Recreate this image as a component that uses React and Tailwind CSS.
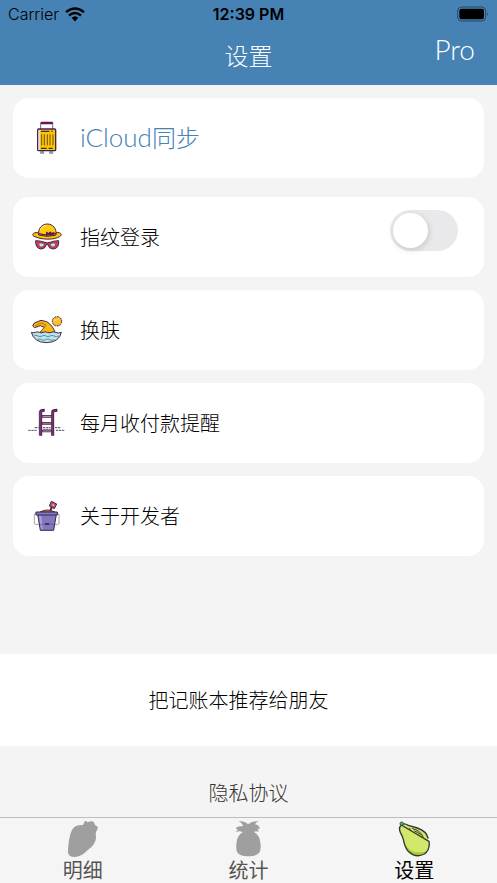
import { useState } from 'react'
import clsx from 'clsx'

const INK = '#45234f'

function WifiIcon() {
  return (
    <svg viewBox="0 0 60 44" className="h-[15px] w-[20px]" fill="none" stroke="#000" strokeWidth="7" aria-hidden="true">
      <path d="M3 15Q30 -7 57 15" />
      <path d="M12 25Q30 10 48 25" />
      <path d="M20 32Q30 23 40 32L30 43Z" fill="#000" stroke="none" />
    </svg>
  )
}

function BatteryIcon() {
  return (
    <svg viewBox="0 0 96 48" className="h-4 w-8" aria-hidden="true">
      <rect x="2" y="3" width="84" height="42" rx="12" fill="none" stroke="#000" strokeOpacity=".45" strokeWidth="3" />
      <rect x="7" y="8" width="74" height="32" rx="7" />
      <path d="M90 18q5 6 0 13z" fillOpacity=".5" />
    </svg>
  )
}

function SuitcaseIcon() {
  return (
    <svg viewBox="21 24 120 120" className="size-10 shrink-0" aria-hidden="true">
      <path d="M62 57V39M98 57V39" stroke="#76658a" strokeWidth="3" />
      <path d="M65 39H96" stroke="#64194f" strokeWidth="7" strokeLinecap="round" />
      <rect x="53" y="57" width="54" height="65" rx="3" fill="#fac600" stroke={INK} strokeWidth="4" />
      <path d="M55 60H60V120H55Z" fill="#ded7ed" />
      <path d="M65 73V106M73 73V106M82 73V106M90 73V106M99 73V106" stroke="#705020" strokeWidth="3" />
      <path d="M63 64H88M94 64H98M63 115H80M86 115H98" stroke={INK} strokeWidth="4" />
      <path d="M62 124H71V130H62ZM89 124H98V130H89Z" fill="#8bbcc5" stroke="#566" strokeWidth="2" />
    </svg>
  )
}

function HatIcon() {
  return (
    <svg viewBox="21 21 120 120" className="size-10 shrink-0" strokeLinejoin="round" aria-hidden="true">
      <path d="M56 68C35 66 34 77 45 80C67 90 101 90 119 80C130 73 119 65 108 68Z" fill="#fac600" stroke={INK} strokeWidth="3" />
      <path d="M56 75C53 55 67 42 82 42C98 42 111 56 108 75Q82 83 56 75Z" fill="#fdcb0b" stroke={INK} strokeWidth="3" />
      <path d="M62 61C63 52 71 47 78 46" fill="none" stroke="#fff1a0" strokeWidth="3" />
      <path d="M57 71Q83 79 108 70M80 67L90 77V67L80 77ZM91 67L101 77V68L90 75Z" fill="none" stroke="#64194f" strokeWidth="4" />
      <path d="M47 92Q61 92 75 97Q82 100 90 97Q103 92 116 92Q118 116 99 117Q86 116 84 104H79Q76 116 64 117Q46 116 47 92Z" fill="#d13c53" stroke={INK} strokeWidth="3" />
      <path d="M56 100Q64 97 73 102Q72 111 64 111Q56 111 56 100ZM91 102Q99 97 107 100Q107 111 99 111Q91 111 91 102Z" fill="#b6eeea" stroke="#743247" strokeWidth="2" />
    </svg>
  )
}

function SwimIcon() {
  return (
    <svg viewBox="21 30 120 120" className="size-10 shrink-0" strokeLinejoin="round" aria-hidden="true">
      <circle cx="111" cy="64" r="14" fill="#fac126" stroke={INK} strokeWidth="3" strokeDasharray="6 2" />
      <path d="M101 60Q109 65 117 54" fill="none" stroke="#ffe08a" strokeWidth="3" />
      <path d="M59 99L73 82L61 77L44 83L38 78L43 69L63 61L80 65Q98 75 106 99Z" fill="#fab90d" stroke={INK} strokeWidth="3" />
      <path d="M45 77L63 69L78 75L66 91" fill="none" stroke="#b2751d" strokeWidth="3" />
      <path d="M34 97Q40 100 46 97Q52 94 58 97Q64 100 70 97Q76 94 82 97Q88 100 94 97Q100 94 106 97Q115 101 124 97Q118 127 79 128Q42 127 34 97Z" fill="#b9e5e8" stroke={INK} strokeWidth="3" />
      <path d="M42 108Q48 104 54 108T66 108T78 108T90 108T102 108T117 108M53 119Q59 115 65 119T77 119T89 119T103 119" fill="none" stroke="#648e9a" strokeWidth="3" />
    </svg>
  )
}

function LadderIcon() {
  return (
    <svg viewBox="21 24 120 120" className="size-10 shrink-0" aria-hidden="true">
      <path d="M66 64H98M66 85H98M66 108H98" stroke={INK} strokeWidth="8" />
      <path d="M67 64H97M67 108H97" stroke="#c5a3c5" strokeWidth="3" />
      <path d="M67 85H97" stroke="#bb5f79" strokeWidth="4" />
      <path d="M57 120V53Q57 46 65 45" fill="none" stroke="#d6cde2" strokeWidth="4" />
      <path d="M62 122V51Q62 46 74 46M98 122V51Q98 46 112 46" fill="none" stroke={INK} strokeWidth="9" />
      <path d="M62 119V54Q62 47 70 47M98 119V54Q98 47 108 47" fill="none" stroke="#84326f" strokeWidth="4" />
      <path d="M25 106H52M108 106H134M44 98H56M69 98H92M105 98H121M70 103H92" fill="none" stroke="#514e66" strokeWidth="3" strokeDasharray="7 2" />
    </svg>
  )
}

function BucketIcon() {
  return (
    <svg viewBox="21 21 120 120" className="size-10 shrink-0" strokeLinejoin="round" aria-hidden="true">
      <path d="M91 65L97 50" stroke={INK} strokeWidth="6" />
      <path d="M94 37L110 45L103 59L88 51Z" fill="#bd4c68" stroke={INK} strokeWidth="3" />
      <path d="M97 47L103 50" stroke="#f3b1b8" strokeWidth="4" />
      <path d="M61 69Q80 57 104 69Z" fill="#f5bd00" stroke={INK} strokeWidth="3" />
      <path d="M49 75H43V103Q43 106 48 106H60M112 75H117V103Q117 106 112 106H102" fill="none" stroke="#78747f" strokeWidth="2" />
      <path d="M53 76H109L101 124H61Z" fill="#8079bf" stroke={INK} strokeWidth="3" />
      <path d="M57 80H64L68 121H63Z" fill="#aaa3db" />
      <path d="M48 69H112V78H48Z" fill="#817abf" stroke={INK} strokeWidth="3" />
      <path d="M61 106H69M92 106H101" stroke="#54496b" strokeWidth="2" />
      <path d="M74 105H88" stroke="#672355" strokeWidth="6" />
    </svg>
  )
}

function StrawberryIcon() {
  return (
    <svg viewBox="39 27 120 120" className="size-10" fill="#9f9f9f" aria-hidden="true">
      <path d="M99 45L103 36L107 32L113 37Q125 30 132 37L135 45L143 50Q145 57 139 64Q137 68 137 73Q141 86 132 101Q125 112 116 118Q104 130 95 135Q75 145 60 138Q53 134 54 118Q55 93 62 69Q70 47 88 46Q94 44 99 45Z" />
    </svg>
  )
}

function PineappleIcon() {
  return (
    <svg viewBox="40 27 120 120" className="size-10" fill="#9f9f9f" aria-hidden="true">
      <path d="M72 34Q89 31 100 43Q113 31 132 34Q125 36 121 43Q134 45 136 57L129 55Q132 59 131 65Q122 62 118 66Q136 76 137 98Q141 122 132 130Q121 140 101 139Q80 140 70 130Q62 121 66 96Q68 76 84 67Q76 61 62 66Q66 61 70 60L63 54Q69 48 86 48Q81 37 72 34Z" />
    </svg>
  )
}

function PapayaIcon() {
  return (
    <svg viewBox="42 27 120 120" className="size-10" aria-hidden="true">
      <path d="M64 45Q72 38 85 46L112 54Q140 64 144 86Q153 118 133 132Q107 146 83 122Q74 110 70 88Q68 80 61 67Q55 53 64 45Z" fill="#d2e86b" />
      <path d="M59 56Q60 69 68 81Q74 109 92 121Q112 132 141 123Q122 147 91 128Q74 115 70 88Q68 78 61 67Z" fill="#aacb32" />
      <path d="M64 45Q72 38 85 46L112 54Q140 64 144 84M147 94Q151 120 133 132Q107 146 83 122Q74 110 70 88Q68 80 61 67Q55 53 64 45Z" fill="none" stroke="#303633" strokeWidth="4" strokeLinecap="round" />
      <path d="M89 56L91 57M98 56Q120 60 129 80M104 63Q114 67 121 73" fill="none" stroke="#303633" strokeWidth="3" strokeLinecap="round" />
      <circle cx="65" cy="41" r="5" fill="#70a889" stroke="#294e45" strokeWidth="3" />
    </svg>
  )
}

const SETTINGS = [
  { label: '换肤', Icon: SwimIcon },
  { label: '每月收付款提醒', Icon: LadderIcon },
  { label: '关于开发者', Icon: BucketIcon },
]

const TABS = [
  { id: 'detail', label: '明细', Icon: StrawberryIcon },
  { id: 'stats', label: '统计', Icon: PineappleIcon },
  { id: 'settings', label: '设置', Icon: PapayaIcon },
]

const CARD = 'flex min-h-20 w-full items-center gap-[13px] rounded-2xl bg-white pl-3.5 pr-[26px] text-left'

export default function App() {
  const [touchId, setTouchId] = useState(false)
  const [tab, setTab] = useState('settings')

  return (
    <div className="flex min-h-screen flex-col bg-[#f4f4f4] font-['Noto_Sans_CJK_SC',sans-serif] text-xl font-light text-black">
      <header className="bg-[#4682b4]">
        {/* Status bar */}
        <div className="grid h-7 grid-cols-3 items-center px-2 font-[Inter,sans-serif] text-base">
          <div className="flex items-center gap-1.5 font-light">
            <span>Carrier</span>
            <WifiIcon />
          </div>
          <span className="text-center font-semibold">12:39 PM</span>
          <div className="flex justify-end">
            <BatteryIcon />
          </div>
        </div>

        {/* Title bar */}
        <div className="grid h-[57px] grid-cols-3 items-start px-[22px] text-white">
          <h1 className="col-start-2 pt-[11px] text-center text-2xl leading-8">设置</h1>
          <button type="button" className="justify-self-end pt-[5px] font-[Lato,sans-serif] text-[28px] leading-8">Pro</button>
        </div>
      </header>

      <main className="flex flex-1 flex-col">
        <div className="flex flex-col gap-[13px] p-[13px]">
          <button type="button" className={clsx(CARD, 'mb-1.5 text-2xl text-[#4682b4]')}>
            <SuitcaseIcon />
            <span className="pb-0.5">
              <span className="font-[Lato,sans-serif] text-[26px]">iCloud</span>同步
            </span>
          </button>

          <div className={CARD}>
            <HatIcon />
            <label htmlFor="touch-id" className="flex-1">指纹登录</label>
            <input
              id="touch-id"
              type="checkbox"
              role="switch"
              checked={touchId}
              onChange={e => setTouchId(e.target.checked)}
              className="mt-[13px] h-[41px] w-[68px] shrink-0 cursor-pointer appearance-none self-start rounded-full bg-[#e9e9eb] p-[3px] before:block before:size-[35px] before:rounded-full before:bg-white before:shadow-[1px_2px_6px_rgba(0,0,0,0.15)] before:transition-transform checked:bg-green-500 checked:before:translate-x-[27px]"
            />
          </div>

          {SETTINGS.map(({ label, Icon }) => (
            <button key={label} type="button" className={CARD}>
              <Icon />
              <span>{label}</span>
            </button>
          ))}
        </div>

        <button type="button" className="mt-auto min-h-[92px] w-full bg-white pr-5">把记账本推荐给朋友</button>
        <a href="#privacy" className="flex h-[71px] items-end justify-center pb-2.5 text-[#333]">隐私协议</a>
      </main>

      {/* Tab bar */}
      <nav className="grid grid-cols-3 border-t border-[#bdbdbd] bg-[#f5f5f5] pt-px font-['Liberation_Sans','Noto_Sans_CJK_SC',sans-serif]">
        {TABS.map(({ id, label, Icon }) => (
          <button
            key={id}
            type="button"
            aria-current={tab === id ? 'page' : undefined}
            onClick={() => setTab(id)}
            className={clsx('flex flex-col items-center font-normal leading-6', tab === id ? 'text-black' : 'text-[#555]')}
          >
            <Icon />
            <span>{label}</span>
          </button>
        ))}
      </nav>
    </div>
  )
}
